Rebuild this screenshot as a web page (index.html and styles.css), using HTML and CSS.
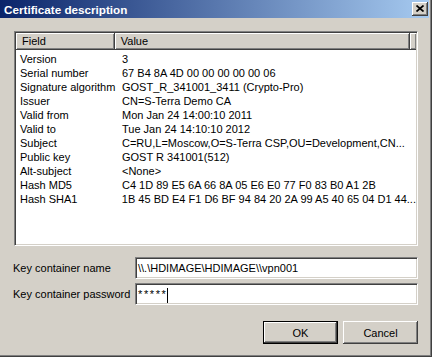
FILE: index.html
```html
<!DOCTYPE html>
<html lang="en">
<head>
    <meta charset="UTF-8">
    <meta name="viewport" content="width=device-width, initial-scale=1.0">
    <title>Certificate description</title>
    <link rel="stylesheet" href="styles.css">
</head>
<body>
    <div class="window">
        <div class="titlebar">
            <span class="title">Certificate description</span>
            <button class="close-btn" title="Close">
                <svg width="8" height="7" viewBox="0 0 8 7">
                    <path d="M0.5 0.5L7.5 6.5M7.5 0.5L0.5 6.5" stroke="#000" stroke-width="1.7" fill="none"/>
                </svg>
            </button>
        </div>
        <div class="content">
            <div class="list">
                <div class="list-head">
                    <div class="col col-field">Field</div>
                    <div class="col col-value">Value</div>
                    <div class="col col-fill"></div>
                </div>
                <div class="list-body">
                    <div class="row"><span class="cell-field">Version</span><span class="cell-value">3</span></div>
                    <div class="row"><span class="cell-field">Serial number</span><span class="cell-value">67 B4 8A 4D 00 00 00 00 00 06</span></div>
                    <div class="row"><span class="cell-field">Signature algorithm</span><span class="cell-value">GOST_R_341001_3411 (Crypto-Pro)</span></div>
                    <div class="row"><span class="cell-field">Issuer</span><span class="cell-value">CN=S-Terra Demo CA</span></div>
                    <div class="row"><span class="cell-field">Valid from</span><span class="cell-value">Mon Jan 24 14:00:10 2011</span></div>
                    <div class="row"><span class="cell-field">Valid to</span><span class="cell-value">Tue Jan 24 14:10:10 2012</span></div>
                    <div class="row"><span class="cell-field">Subject</span><span class="cell-value">C=RU,L=Moscow,O=S-Terra CSP,OU=Development,CN...</span></div>
                    <div class="row"><span class="cell-field">Public key</span><span class="cell-value">GOST R 341001(512)</span></div>
                    <div class="row"><span class="cell-field">Alt-subject</span><span class="cell-value">&lt;None&gt;</span></div>
                    <div class="row"><span class="cell-field">Hash MD5</span><span class="cell-value">C4 1D 89 E5 6A 66 8A 05 E6 E0 77 F0 83 B0 A1 2B</span></div>
                    <div class="row"><span class="cell-field">Hash SHA1</span><span class="cell-value">1B 45 BD E4 F1 D6 BF 94 84 20 2A 99 A5 40 65 04 D1 44...</span></div>
                </div>
            </div>

            <div class="form">
                <div class="form-row">
                    <span class="form-label">Key container name</span>
                    <div class="field">\\.\HDIMAGE\HDIMAGE\\vpn001</div>
                </div>
                <div class="form-row">
                    <span class="form-label">Key container password</span>
                    <div class="field"><span class="stars">*****</span><span class="caret"></span></div>
                </div>
            </div>

            <div class="actions">
                <button class="btn btn-default">OK</button>
                <button class="btn">Cancel</button>
            </div>
        </div>
    </div>
</body>
</html>
```

FILE: styles.css
```css
:root {
    --face: #d4d0c8;
    --shadow: #808080;
    --dark: #404040;
    --light: #ffffff;
    --font: "Liberation Sans", Arial, sans-serif;
}

body {
    margin: 0;
    font-family: var(--font);
    font-size: 11px;
    color: #000;
    background-color: var(--face);
}

.window {
    width: 432px;
    height: 357px;
    box-sizing: border-box;
    background-color: var(--face);
    border-right: 1px solid var(--dark);
    border-bottom: 1px solid var(--dark);
    box-shadow: inset -1px -1px var(--shadow);
}

.titlebar {
    height: 18px;
    margin-right: 2px;
    padding: 0 1px 0 4px;
    display: flex;
    align-items: center;
    justify-content: space-between;
    background: linear-gradient(to right, #0a246a, #a6caf0);
}

.title {
    color: #fff;
    font-weight: bold;
    font-size: 11.7px;
}

.close-btn {
    width: 16px;
    height: 14px;
    padding: 0 1px 1px 0;
    border: none;
    display: flex;
    align-items: center;
    justify-content: center;
    background-color: var(--face);
    box-shadow: inset -1px -1px var(--dark), inset 1px 1px var(--light), inset -2px -2px var(--shadow);
}

.content {
    padding: 13px 13px 0 14px;
}

/* list view */
.list {
    height: 215px;
    box-sizing: border-box;
    padding: 1px;
    background-color: #fff;
    border: 1px solid;
    border-color: var(--shadow) var(--light) var(--light) var(--shadow);
    box-shadow: inset 1px 1px var(--dark), inset -1px -1px var(--face);
}

.list-head {
    display: flex;
    height: 17px;
}

.col {
    box-sizing: border-box;
    height: 17px;
    padding-left: 6px;
    line-height: 16px;
    background-color: var(--face);
    border-right: 1px solid var(--dark);
    border-bottom: 1px solid var(--dark);
    box-shadow: inset 1px 1px var(--light), inset -1px -1px var(--shadow);
}

.col-field {
    width: 99px;
}

.col-value {
    width: 296px;
}

.col-fill {
    flex: 1;
    border-right: none;
}

.list-body {
    padding-top: 2px;
}

.row {
    display: flex;
    height: 14px;
    line-height: 14px;
    white-space: nowrap;
}

.cell-field {
    width: 95px;
    padding-left: 4px;
}

.cell-value {
    padding-left: 7px;
}

/* key container */
.form {
    margin-top: 11px;
    display: flex;
    flex-direction: column;
    gap: 4px;
}

.form-row {
    display: flex;
    align-items: center;
}

.form-label {
    width: 121px;
    margin-left: -1px;
    padding-right: 1px;
}

.field {
    flex: 1;
    height: 22px;
    box-sizing: border-box;
    padding: 0 2px;
    line-height: 20px;
    white-space: nowrap;
    background-color: #fff;
    border: 1px solid;
    border-color: var(--shadow) var(--light) var(--light) var(--shadow);
    box-shadow: inset 1px 1px var(--dark), inset -1px -1px var(--face);
}

.stars {
    letter-spacing: 1.6px;
}

.caret {
    display: inline-block;
    width: 1px;
    height: 15px;
    vertical-align: middle;
    background-color: #000;
}

.actions {
    margin-top: 16px;
    display: flex;
    justify-content: flex-end;
    gap: 5px;
}

.btn {
    width: 75px;
    height: 23px;
    padding: 0;
    border: none;
    font-family: var(--font);
    font-size: 11px;
    color: #000;
    background-color: var(--face);
    box-shadow: inset -1px -1px var(--dark), inset 1px 1px var(--light), inset -2px -2px var(--shadow);
}

.btn-default {
    border: 1px solid #000;
}
```
